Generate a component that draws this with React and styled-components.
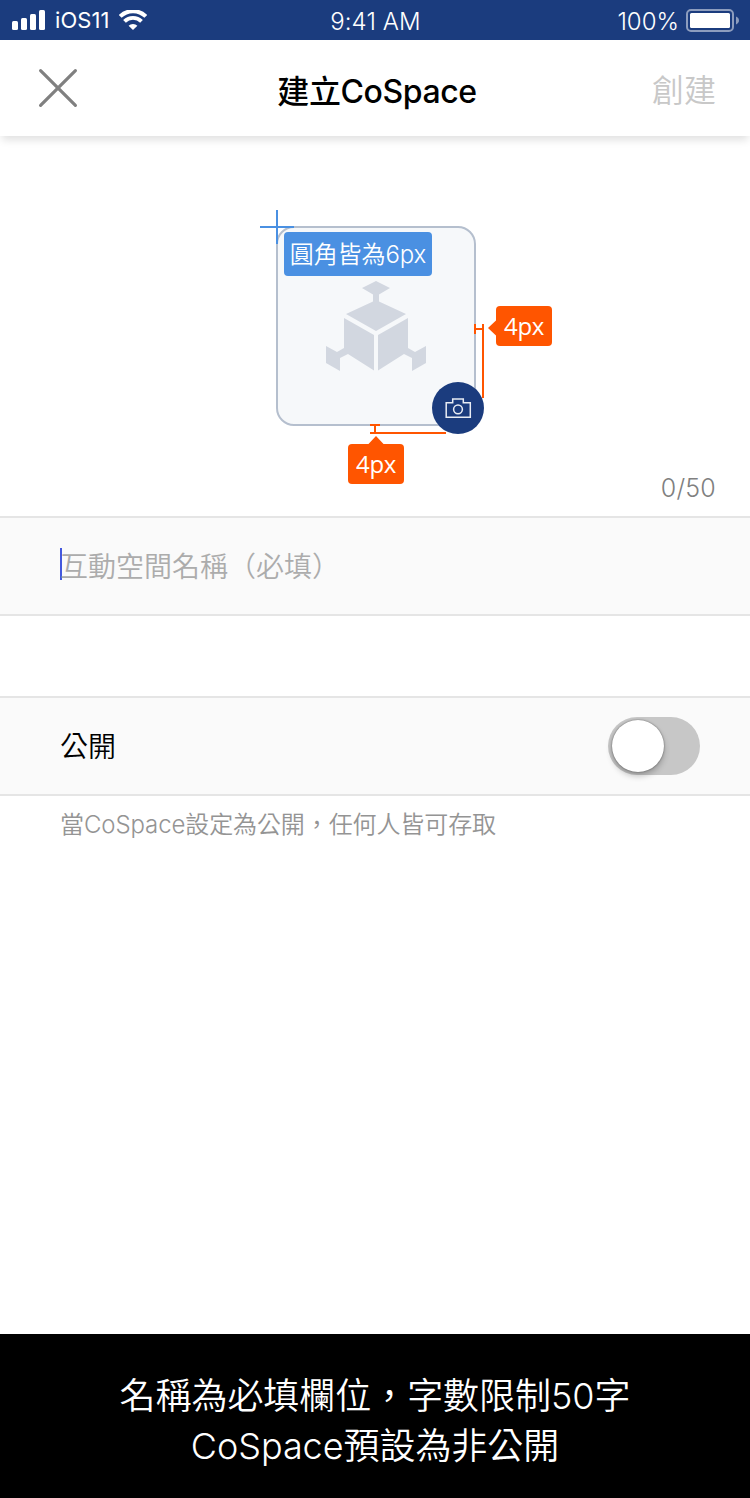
import React, { useState } from "react";
import styled, { createGlobalStyle } from "styled-components";

const GlobalStyle = createGlobalStyle`
  * { box-sizing: border-box; }
  body { margin: 0; background: #fff; }
`;

const Screen = styled.div`
  width: 750px;
  height: 1498px;
  display: flex;
  flex-direction: column;
  overflow: hidden;
  background: #fff;
  color: #000;
  font-family: Inter, "Noto Sans CJK TC", sans-serif;
`;

const Label = styled.span`
  font-size: ${(p) => p.$size}px;
  line-height: ${(p) => p.$line || p.$size}px;
  font-weight: ${(p) => p.$weight || 350};
  color: ${(p) => p.$color || "inherit"};
  letter-spacing: ${(p) => p.$track || 0}px;
  margin-top: ${(p) => p.$drop || 0}px;
  white-space: nowrap;
`;

const StatusBar = styled.div`
  display: grid;
  grid-template-columns: 1fr auto 1fr;
  align-items: center;
  height: 40px;
  flex: none;
  padding: 0 11px 0 12px;
  background: #1b3c7e;
  color: #fff;
`;

const StatusGroup = styled.div`
  display: flex;
  align-items: center;
  justify-content: ${(p) => (p.$end ? "flex-end" : "flex-start")};
  gap: ${(p) => p.$gap}px;
`;

const Header = styled.header`
  display: grid;
  grid-template-columns: 1fr auto 1fr;
  align-items: center;
  height: 96px;
  flex: none;
  padding: 0 34px 0 38px;
  background: #fff;
  box-shadow: 0 6px 8px -2px rgba(0, 0, 0, 0.12);
`;

const TextButton = styled.button`
  justify-self: end;
  padding: 6px 0 0;
  border: 0;
  background: none;
  font: inherit;
  line-height: 0;
`;

const IconButton = styled(TextButton)`
  justify-self: start;
  padding: 0;
`;

const CoverSection = styled.section`
  display: flex;
  flex-direction: column;
  align-items: center;
  height: 380px;
  flex: none;
  padding: 90px 34px 0 36px;
`;

const Cover = styled.div`
  position: relative;
  width: 200px;
  height: 200px;
  padding: 53px 48px;
  border: 2px solid #b5bfce;
  border-radius: 18px;
  background: #f6f8fa;
`;

const CameraBadge = styled.button`
  position: absolute;
  left: 154px;
  top: 154px;
  width: 52px;
  height: 52px;
  padding: 0;
  border: 0;
  border-radius: 50%;
  background: #1b3c7e;
  line-height: 0;
`;

const Guides = styled.svg`
  position: absolute;
  left: -18px;
  top: -18px;
  pointer-events: none;
`;

const Tag = styled.div`
  position: absolute;
  left: ${(p) => p.$x}px;
  top: ${(p) => p.$y}px;
  width: ${(p) => p.$w}px;
  height: ${(p) => p.$h}px;
  display: flex;
  align-items: center;
  justify-content: center;
  border-radius: 4px;
  background: ${(p) => p.$bg};
  color: #fff;
  font-family: ${(p) => (p.$humanist ? '"Open Sans", sans-serif' : "inherit")};
`;

const Counter = styled.div`
  align-self: flex-end;
  margin-top: 47px;
  line-height: 0;
`;

const Row = styled.div`
  display: flex;
  align-items: center;
  justify-content: ${(p) => (p.$spread ? "space-between" : "flex-start")};
  height: 100px;
  flex: none;
  padding: 0 50px 0 60px;
  margin-bottom: ${(p) => p.$after}px;
  border: solid #e5e5e5;
  border-width: 2px 0;
  background: #fafafa;
`;

const Caret = styled.span`
  width: 2px;
  height: 32px;
  margin: -4px -2px 0 0;
  background: #4458dd;
`;

const Switch = styled.button`
  display: flex;
  width: 92px;
  height: 58px;
  padding: 3px 4px;
  border: 0;
  border-radius: 29px;
  background: #c7c7c7;
  justify-content: ${(p) => (p.$on ? "flex-end" : "flex-start")};
`;

const Thumb = styled.span`
  width: 52px;
  height: 52px;
  border-radius: 50%;
  background: #fff;
  box-shadow: 0 4px 6px rgba(0, 0, 0, 0.24), 0 0 2px rgba(0, 0, 0, 0.5);
`;

const Hint = styled.div`
  flex: 1;
  padding: 15px 60px;
  line-height: 0;
`;

const Footer = styled.footer`
  display: flex;
  flex-direction: column;
  align-items: center;
  height: 164px;
  flex: none;
  padding-top: 37px;
  background: #000;
  color: #fff;
`;

const Signal = () => (
  <svg width="34" height="20" viewBox="0 0 34 20" fill="#fff">
    <rect x="0" y="11" width="6" height="9" rx="1.5" />
    <rect x="9" y="8" width="6" height="12" rx="1.5" />
    <rect x="18" y="4" width="6" height="16" rx="1.5" />
    <rect x="27" y="0" width="6" height="20" rx="1.5" />
  </svg>
);

const Wifi = () => (
  <svg width="28" height="20" viewBox="0 0 28 20" fill="none" stroke="#fff">
    <path d="M1.2 6.4a18.2 18.2 0 0 1 25.6 0" strokeWidth="4" />
    <path d="M5.5 11.4a12 12 0 0 1 17 0" strokeWidth="3.8" />
    <path d="M14 20l-4.4-4.200a6 6 0 0 1 8.800 0z" fill="#fff" stroke="none" />
  </svg>
);

const Battery = () => (
  <svg width="53" height="23" viewBox="0 0 53 23">
    <rect x="1" y="1" width="46" height="21" rx="4" fill="none" stroke="#8d9dbe" strokeWidth="2" />
    <rect x="4" y="4" width="40" height="15" rx="1.5" fill="#fff" />
    <path d="M50 7.5c1.8 .8 3 2.2 3 4s-1.200 3.200-3 4z" fill="#8d9dbe" />
  </svg>
);

const Close = () => (
  <svg width="40" height="40" viewBox="0 0 40 40" stroke="#808080" strokeWidth="3.2" strokeLinecap="round">
    <path d="M2.600 2.600L37.400 37.400M37.400 2.600L2.600 37.400" />
  </svg>
);

const Cubes = () => (
  <svg width="100" height="90" viewBox="326 281 100 90" fill="#d2d7e0">
    <path d="M376 281l14 7-11 6.500v7l27 12.500-30 17-30-17 27-12.500v-7L362 288z" />
    <path d="M344 318l30 17v35.500L348 354l-8 4v13l-14-8v-17l11 6 7-4z" />
    <path d="M408 318l-30 17v35.500L404 354l8 4v13l14-8v-17l-11 6-7-4z" />
  </svg>
);

const Camera = () => (
  <svg width="52" height="52" viewBox="432 382 52 52" fill="none" stroke="#e8ecf4" strokeWidth="1.500">
    <path d="M446.200 402.700H452.700V399H463.300V402.700H470.300V417.300H446.200Z" />
    <circle cx="458" cy="409.300" r="4.400" />
  </svg>
);

const Measurements = () => (
  <Guides width="300" height="280" viewBox="260 210 300 280">
    <g fill="#4a90e2">
      <path d="M276 210h2v34h-2zM260 226h34v2h-34z" />
    </g>
    <g fill="#ff5500">
      <path d="M474 324h2v10h-2zM474 328h10v2h-10zM482 324h2v74h-2z" />
      <path d="M370 424h10v2h-10zM374 424h2v10h-2zM370 432h76v2h-76z" />
      <path d="M488 328l8.500-8v16zM376 436l8 8.500h-16z" />
    </g>
  </Guides>
);

export default function App() {
  const [isPublic, setPublic] = useState(false);
  return (
    <Screen>
      <GlobalStyle />
      <StatusBar>
        <StatusGroup $gap={9}>
          <Signal />
          <Label $size={22} $weight={400} $track={0.1}>iOS11</Label>
          <Wifi />
        </StatusGroup>
        <Label $size={24} $drop={3} $track={0.1}>9:41 AM</Label>
        <StatusGroup $gap={7} $end>
          <Label $size={24} $drop={3}>100%</Label>
          <Battery />
        </StatusGroup>
      </StatusBar>

      <Header>
        <IconButton aria-label="關閉"><Close /></IconButton>
        <Label $size={32} $weight={500} $track={-0.4} $drop={8}>建立CoSpace</Label>
        <TextButton disabled>
          <Label $size={32} $color="#c8c8c8">創建</Label>
        </TextButton>
      </Header>

      <CoverSection>
        <Cover>
          <Cubes />
          <Measurements />
          <CameraBadge aria-label="相機"><Camera /></CameraBadge>
          <Tag $x={6} $y={4} $w={148} $h={44} $bg="#4a90e2">
            <Label $size={24} $drop={2} $track={-0.1}>圓角皆為6px</Label>
          </Tag>
          <Tag $x={218} $y={78} $w={56} $h={40} $bg="#ff5500" $humanist>
            <Label $size={24} $weight={400} $track={-0.3} $line={26}>4px</Label>
          </Tag>
          <Tag $x={70} $y={216} $w={56} $h={40} $bg="#ff5500" $humanist>
            <Label $size={24} $weight={400} $track={-0.3} $line={26}>4px</Label>
          </Tag>
        </Cover>
        <Counter>
          <Label $size={25} $line={30} $track={0.2} $color="#808080">0/50</Label>
        </Counter>
      </CoverSection>

      <Row $after={80}>
        <Caret />
        <Label $size={28} $color="#acacac" $drop={2}>互動空間名稱（必填）</Label>
      </Row>

      <Row $after={0} $spread>
        <Label $size={28} $drop={2}>公開</Label>
        <Switch $on={isPublic} onClick={() => setPublic(!isPublic)} aria-label="公開">
          <Thumb />
        </Switch>
      </Row>
      <Hint>
        <Label $size={24} $line={28} $color="#949494" $track={-0.1}>當CoSpace設定為公開，任何人皆可存取</Label>
      </Hint>

      <Footer>
        <Label $size={36} $line={50} $track={-0.05}>名稱為必填欄位，字數限制50字</Label>
        <Label $size={36} $line={50} $track={-0.05}>CoSpace預設為非公開</Label>
      </Footer>
    </Screen>
  );
}
